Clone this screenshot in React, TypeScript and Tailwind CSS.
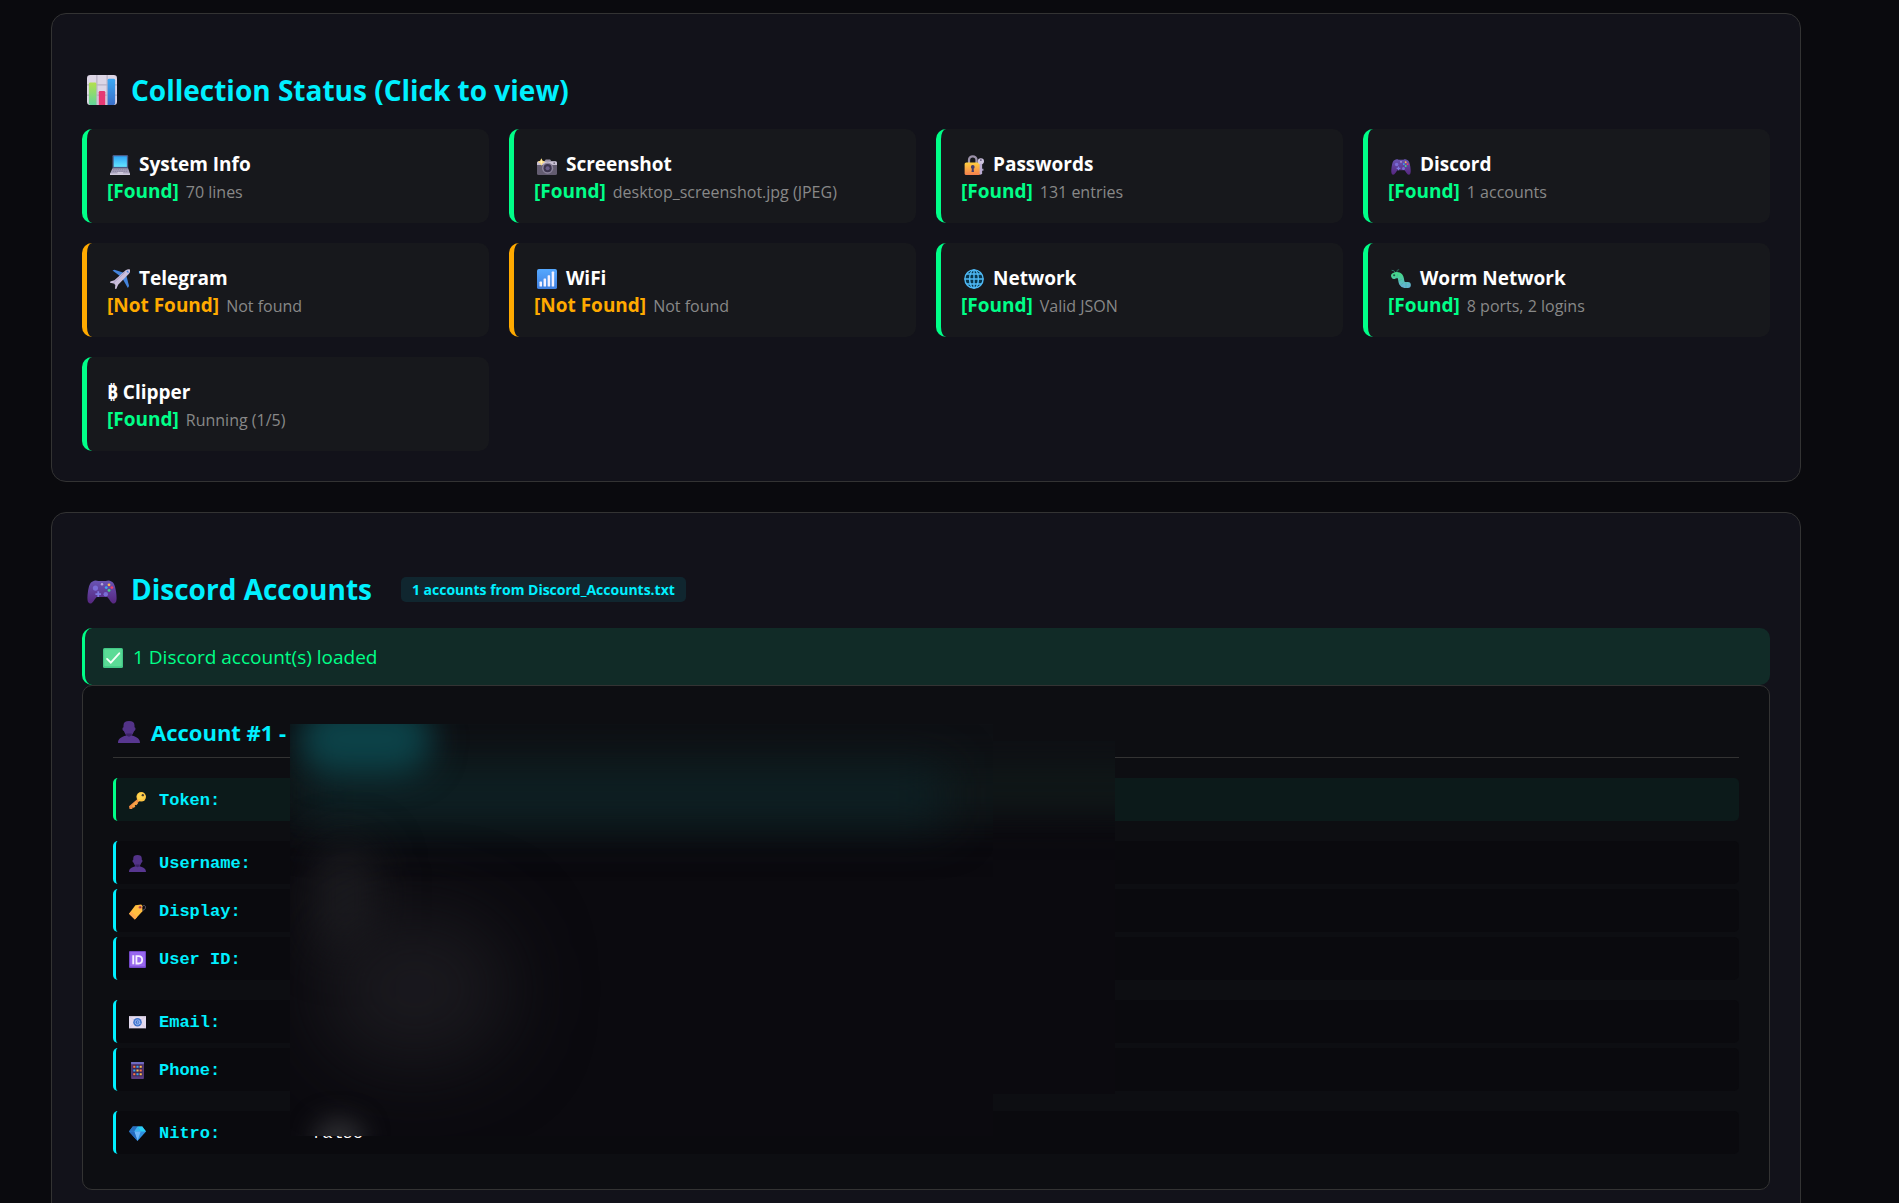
import type { ReactNode } from "react";

type IconName =
  | "chart"
  | "laptop"
  | "camera"
  | "lock"
  | "gamepad"
  | "plane"
  | "signal"
  | "globe"
  | "worm"
  | "check"
  | "person"
  | "key"
  | "tag"
  | "id"
  | "email"
  | "phone"
  | "gem";

const icons: Record<IconName, ReactNode> = {
  chart: (
    <>
      <rect width="32" height="32" rx="3.5" fill="#ddd6e6" />
      <path d="M0 10.5h32M0 21.5h32M10.5 0v32M21.5 0v32" stroke="#b9b2c6" strokeWidth="1.4" />
      <path d="M2 9.5a1.5 1.5 0 0 1 1.5-1.5h5A1.5 1.5 0 0 1 10 9.500V32H3.500A3.500 3.500 0 0 1 2 30z" fill="url(#barGreen)" />
      <path d="M12.500 18.500a1.500 1.500 0 0 1 1.500-1.500h4a1.500 1.500 0 0 1 1.500 1.500V32h-7z" fill="#e63974" />
      <path d="M22 5.500A1.500 1.500 0 0 1 23.500 4h5A1.500 1.500 0 0 1 30 5.500V31l-1.500 1H22z" fill="url(#barBlue)" />
    </>
  ),
  laptop: (
    <>
      <path d="M4 2a2 2 0 0 1 2-2h21a2 2 0 0 1 2 2v19H4z" fill="#4a5a86" />
      <path d="M6 2h21v17H6z" fill="url(#screen)" />
      <path d="M4 21h25l3 9v2H0v-2z" fill="#a9a3bd" />
      <path d="M5 23.500h23M4 26h25" stroke="#837c9b" strokeWidth="1.300" strokeDasharray="2.500 1" />
      <path d="M0 29.500h32V32H0z" fill="#cfc8dc" />
      <path d="M12 27.500h9v2h-9z" fill="#d9d3e4" />
    </>
  ),
  camera: (
    <>
      <rect y="10" width="32" height="22" rx="2.500" fill="#635c70" />
      <path d="M0 12.500A2.500 2.500 0 0 1 2.500 10h27a2.500 2.500 0 0 1 2.500 2.500V16H0z" fill="#c9c1d4" />
      <path d="M12 10l2-3h7l2 3z" fill="#9a92a8" />
      <circle cx="17" cy="21" r="9" fill="#8c849c" />
      <circle cx="17" cy="21" r="6.500" fill="#3c344e" />
      <circle cx="17" cy="21" r="3.200" fill="#695d88" />
      <path d="M7 5l2 4 4 2-4 2-2 4-2-4-4-2 4-2z" fill="#ffdf83" />
      <path d="M7 8l1.500 3L7 14l-1.500-3z" fill="#fff3c4" />
      <circle cx="27.500" cy="13" r="1.300" fill="#635c70" />
    </>
  ),
  lock: (
    <>
      <path d="M8 14V8a6 6 0 0 1 12 0v6" fill="none" stroke="#9b91a8" strokeWidth="3.600" />
      <rect x="1" y="12" width="25" height="20" rx="2.500" fill="url(#lockBody)" />
      <circle cx="14" cy="19" r="3" fill="#433b6b" />
      <path d="M12.800 20h2.400l.8 7h-4z" fill="#433b6b" />
      <circle cx="27" cy="10" r="5" fill="#cfc5e0" />
      <circle cx="27" cy="8" r="1.400" fill="#574b70" />
      <path d="M25 14h4v15l-2 3-2-2z" fill="#b9abd1" />
      <path d="M29 22h2v3h-2z" fill="#b9abd1" />
    </>
  ),
  gamepad: (
    <>
      <path d="M6 8c2-1.500 4-1.500 6-.5h8c2-1 4-1 6 .5C29 9 30 13 31 19c.8 6 1.200 11.500-2 12.500-3 .8-5-5-7.500-7h-11C8 26.500 6 32.300 3 31.500 -.2 30.500 .2 25 1 19 2 13 3 9 6 8z" fill="url(#pad)" />
      <circle cx="9" cy="15" r="2.800" fill="#7a6cd6" />
      <circle cx="20" cy="21.500" r="2.400" fill="#7a6cd6" />
      <path d="M12 18.500v6M9 21.500h6" stroke="#7d79e0" strokeWidth="1.900" />
      <circle cx="23.500" cy="11.500" r="1.500" fill="#ffb84d" />
      <circle cx="26.500" cy="14.500" r="1.500" fill="#ee4168" />
      <circle cx="20.500" cy="14.500" r="1.500" fill="#3ca8f5" />
      <circle cx="23.500" cy="17.500" r="1.500" fill="#45d98a" />
      <circle cx="16" cy="11" r="1.300" fill="#b8a8dc" />
    </>
  ),
  plane: (
    <>
      <path d="M4 2.500l3-1.500 15 5-5 6z" fill="#4383dc" />
      <path d="M30.500 27l-2 3.500L20 15l6-5z" fill="#4383dc" />
      <path d="M25 2c3-2 6-2 7-1 .8 1.500.5 4-2 7L13 25l-3 7-2-.5.5-6L6 23l-6-1 .5-2L7 18z" fill="#cbbfdc" />
      <path d="M8 24l-2-2 18-17" stroke="#a493c0" strokeWidth="1.200" fill="none" />
      <path d="M27 3l2.500 2.500" stroke="#4383dc" strokeWidth="2" />
    </>
  ),
  signal: (
    <>
      <rect width="32" height="32" rx="3" fill="url(#signalBg)" />
      <rect x="4" y="20" width="4" height="8" rx="1" fill="#f3f1ff" />
      <rect x="10.500" y="15" width="4" height="13" rx="1" fill="#f3f1ff" />
      <rect x="17" y="10" width="4" height="18" rx="1" fill="#f3f1ff" />
      <rect x="23.500" y="4" width="4" height="24" rx="1" fill="#f3f1ff" />
    </>
  ),
  globe: (
    <>
      <circle cx="16" cy="16" r="14.700" fill="#07354b" />
      <g fill="none" stroke="#4fb9f5" strokeWidth="2.300">
        <circle cx="16" cy="16" r="14.600" />
        <ellipse cx="16" cy="16" rx="7" ry="14.600" />
        <path d="M16 1v30M1 16h30M4 8h24M4 24h24" />
      </g>
    </>
  ),
  worm: (
    <>
      <path d="M7 6L5 3 1 2M9 6l1-4 3-1" stroke="#2d7566" strokeWidth="1.500" fill="none" />
      <path d="M5 11c5-3 10-1 11 5 .7 5 1 9 6 9.500h5" stroke="url(#wormBody)" strokeWidth="9.500" strokeLinecap="round" fill="none" />
      <path d="M11 8l-2 7M18 16l-6 3M20 22l-5 4M24 21.500V30" stroke="#3eb592" strokeWidth=".8" />
      <circle cx="5" cy="10" r="1.700" fill="#205548" />
    </>
  ),
  check: (
    <>
      <rect width="32" height="32" rx="2.500" fill="#42c886" />
      <rect x="2" y="2" width="28" height="27" rx="1" fill="#5bdb96" />
      <path d="M6.500 17.500l6 6L26 8.500" stroke="#f4fff8" strokeWidth="3" fill="none" strokeLinecap="round" />
    </>
  ),
  person: (
    <>
      <path d="M8 6c0-4 3-6 8-6s8 2 8 6v3c2 0 2 5-.5 5.500C22 18 20 21 20 21h-8s-2-3-3.500-6.500C6 14 6 9 8 9z" fill="#533388" />
      <path d="M12 18h8v4l-4 3-4-3z" fill="#3c2367" />
      <path d="M0 32c0-6 4-9 12-11l4 2 4-2c8 2 12 5 12 11z" fill="#583790" />
    </>
  ),
  key: (
    <>
      <path d="M17 12l4 4L7 29l-1 3H1l-1-5z" fill="#f28c43" />
      <path d="M5 26l4 4 3-3-2-2 2-1 2 1 3-4-4-4z" fill="#f6a145" />
      <circle cx="23" cy="9" r="9" fill="#ffc744" />
      <circle cx="22" cy="8" r="6" fill="#ffd550" />
      <circle cx="26" cy="6" r="2.200" fill="#4a3b2f" />
    </>
  ),
  tag: (
    <>
      <path d="M24 8c3-5 7-4 7 0s-4 7-8 5" stroke="#6b6478" strokeWidth="1.700" fill="none" />
      <path d="M12 4l11-1 2 2v11L11 31 0 20z" fill="#ffbd3f" />
      <path d="M0 20l4-4 11 11-4 4z" fill="#ffa84d" />
      <circle cx="21" cy="8" r="3" fill="#df5f4f" />
      <circle cx="21" cy="8" r="1.300" fill="#5c3440" />
    </>
  ),
  id: (
    <>
      <rect width="32" height="32" rx="2" fill="#7448c9" />
      <rect x="2" y="2" width="28" height="27" rx="1" fill="#9867ef" />
      <path d="M8 8v17" stroke="#f6efff" strokeWidth="3.600" />
      <path d="M14 9.500h4c9 0 9 14 0 14h-4z" stroke="#f6efff" strokeWidth="3.400" fill="none" />
    </>
  ),
  email: (
    <>
      <rect y="4" width="32" height="23" fill="#e4dbef" />
      <path d="M0 4l16 13L32 4M0 27l12-12M32 27L20 15" stroke="#cfc0dc" strokeWidth="1.200" fill="none" />
      <circle cx="16" cy="15.500" r="8" fill="#3f74cd" />
      <circle cx="16" cy="15.500" r="4.500" fill="none" stroke="#a9c4f5" strokeWidth="1.500" />
      <path d="M16 13v5M19 13v5h3" stroke="#a9c4f5" strokeWidth="1.200" fill="none" />
    </>
  ),
  phone: (
    <>
      <rect x="4" width="24" height="32" rx="1.500" fill="#5c3d80" />
      <path d="M4 0h24v4H4z" fill="#6f6bc0" />
      <rect x="6.500" y="5" width="19" height="22" fill="#3a2554" />
      <path d="M8 9h4M8 23h4M20 16h4" stroke="#ff7a45" strokeWidth="4" />
      <path d="M14 9h4M8 16h4M14 23h4" stroke="#3fa7ee" strokeWidth="4" />
      <path d="M20 9h4M14 16h4M20 23h4" stroke="#ffc04a" strokeWidth="4" />
    </>
  ),
  gem: (
    <>
      <path d="M7 3h18l7 9-16 18L0 12z" fill="#2f8fe0" />
      <path d="M7 3h9l-6 9H0z" fill="#2a6fc0" />
      <path d="M16 3h9l7 9H22z" fill="#2bd0f5" />
      <path d="M16 3l6 9H10z" fill="#3cb4ef" />
      <path d="M10 12h12l-6 18z" fill="#6db5f8" />
      <path d="M0 12h10l6 18z" fill="#2468bd" />
    </>
  ),
};

function Icon({ name, className }: { name: IconName; className: string }) {
  return (
    <svg viewBox="0 0 32 32" aria-hidden="true" className={`shrink-0 ${className}`}>
      {icons[name]}
    </svg>
  );
}

// Shared gradients, referenced by id from the icons above
function IconDefs() {
  const defs = [
    { id: "barGreen", from: "#b4e04e", to: "#62d49a" },
    { id: "barBlue", from: "#3ba9f5", to: "#3b6fc9" },
    { id: "screen", from: "#2fa5f5", to: "#63e5ff" },
    { id: "lockBody", from: "#ffcf3f", to: "#f57f4d" },
    { id: "pad", from: "#6a55b5", to: "#56267f" },
    { id: "signalBg", from: "#55a8ff", to: "#3f7fe0" },
    { id: "wormBody", from: "#45d68c", to: "#62b3cf" },
  ];
  return (
    <svg className="absolute size-0" aria-hidden="true">
      <defs>
        {defs.map((d) => (
          <linearGradient key={d.id} id={d.id} x1="0" y1="0" x2="0" y2="1">
            <stop offset="0" stopColor={d.from} />
            <stop offset="1" stopColor={d.to} />
          </linearGradient>
        ))}
      </defs>
    </svg>
  );
}

interface Status {
  title: string;
  icon?: IconName;
  found: boolean;
  detail: string;
}

const statuses: Status[] = [
  { title: "System Info", icon: "laptop", found: true, detail: "70 lines" },
  { title: "Screenshot", icon: "camera", found: true, detail: "desktop_screenshot.jpg (JPEG)" },
  { title: "Passwords", icon: "lock", found: true, detail: "131 entries" },
  { title: "Discord", icon: "gamepad", found: true, detail: "1 accounts" },
  { title: "Telegram", icon: "plane", found: false, detail: "Not found" },
  { title: "WiFi", icon: "signal", found: false, detail: "Not found" },
  { title: "Network", icon: "globe", found: true, detail: "Valid JSON" },
  { title: "Worm Network", icon: "worm", found: true, detail: "8 ports, 2 logins" },
  { title: "₿ Clipper", found: true, detail: "Running (1/5)" },
];

interface Field {
  label: string;
  icon: IconName;
  value?: string;
  highlight?: boolean;
}

const fieldGroups: Field[][] = [
  [{ label: "Token:", icon: "key", highlight: true }],
  [
    { label: "Username:", icon: "person" },
    { label: "Display:", icon: "tag" },
    { label: "User ID:", icon: "id" },
  ],
  [
    { label: "Email:", icon: "email" },
    { label: "Phone:", icon: "phone" },
  ],
  [{ label: "Nitro:", icon: "gem", value: "false" }],
];

function StatusCard({ status }: { status: Status }) {
  return (
    <a
      href="#details"
      className={`block rounded-[10px] border-l-[5px] bg-[#17181c] px-5 pt-[22px] pb-[18px] leading-[27px] ${
        status.found ? "border-[#00ff88]" : "border-[#ffaa00]"
      }`}
    >
      <div className="flex items-center text-[19px] font-bold text-white">
        {status.icon && <Icon name={status.icon} className="ml-[3px] mr-[9px] size-5" />}
        {status.title}
      </div>
      <div className="flex h-[27px] items-baseline gap-[7px]">
        <span className={`text-[19px] font-bold ${status.found ? "text-[#00ff88]" : "text-[#ffaa00]"}`}>
          {status.found ? "[Found]" : "[Not Found]"}
        </span>
        <span className="text-base leading-[27px] text-[#888888]">{status.detail}</span>
      </div>
    </a>
  );
}

function FieldRow({ field }: { field: Field }) {
  return (
    <div
      className={`flex h-[43px] items-center rounded-[5px] border-l-[3px] pt-0.5 pl-[13px] ${
        field.highlight ? "border-[#00ff88] bg-[#0c1a1a]" : "border-[#00f0ff] bg-[#0a0a0e]"
      }`}
    >
      <dt className="flex w-[183px] items-center font-bold text-[#00f0ff]">
        <Icon name={field.icon} className="mr-[13px] size-[17px]" />
        {field.label}
      </dt>
      <dd className="text-white">{field.value}</dd>
    </div>
  );
}

// Blurred cover over the private values
function RedactedArea() {
  return (
    <>
      <div className="absolute left-[207px] top-[38px] h-[412px] w-[703px] overflow-hidden bg-[#0b0a0f]">
        <div className="absolute -left-4 -top-16 h-[160px] w-[900px] bg-[#0e1014] blur-xl" />
        <div className="absolute -left-4 top-[40px] h-[54px] w-[900px] bg-[#0f1618] blur-lg" />
        <div className="absolute left-4 top-[44px] h-[56px] w-[640px] bg-[#0d2024] blur-xl" />
        <div className="absolute left-[8px] -top-5 h-[70px] w-[135px] rounded-full bg-[#0c4248] blur-lg" />
        <div className="absolute left-[25px] top-[120px] h-[110px] w-[60px] rounded-full bg-[#1d1d21] blur-xl" />
        <div className="absolute left-[30px] top-[190px] h-[150px] w-[190px] rounded-full bg-[#1a191e] blur-2xl" />
        <div className="absolute left-[24px] top-[395px] h-[40px] w-[50px] rounded-full bg-[#2c2c30] blur-md" />
      </div>
      <div className="absolute left-[910px] top-[55px] h-[353px] w-[122px] overflow-hidden bg-[#0b0a0f]">
        <div className="absolute -left-16 -top-16 h-[144px] w-[250px] bg-[#0e1014] blur-lg" />
        <div className="absolute -left-16 top-[23px] h-[46px] w-[250px] bg-[#0f1617] blur-md" />
      </div>
    </>
  );
}

function Panel({ children }: { children: ReactNode }) {
  return (
    <section className="rounded-[15px] border border-[#333333] bg-[#12121a] px-[30px] pt-14 pb-[30px]">
      {children}
    </section>
  );
}

function PanelHeading({ icon, children }: { icon: IconName; children: ReactNode }) {
  return (
    <h2 className="flex items-center text-[28px] leading-10 font-bold text-[#00f0ff]">
      <Icon name={icon} className="ml-[5px] mr-[14px] size-[30px]" />
      {children}
    </h2>
  );
}

export default function App() {
  return (
    <main className="flex h-screen flex-col gap-[30px] overflow-hidden bg-[#0a0a0e] pt-[13px] pr-[98px] pl-[51px] font-['Open_Sans','Noto_Sans',sans-serif]">
      <IconDefs />

      <Panel>
        <PanelHeading icon="chart">Collection Status (Click to view)</PanelHeading>
        <div className="mt-[19px] grid grid-cols-4 gap-5">
          {statuses.map((status) => (
            <StatusCard key={status.title} status={status} />
          ))}
        </div>
      </Panel>

      <Panel>
        <div className="flex items-center">
          <PanelHeading icon="gamepad">Discord Accounts</PanelHeading>
          <span className="ml-[29px] rounded-[5px] bg-[#10262f] px-[11px] text-sm leading-[25px] font-bold text-[#00f0ff]">
            1 accounts from Discord_Accounts.txt
          </span>
        </div>

        <p className="mt-[19px] flex h-[57px] items-center rounded-[10px] border-l-[3px] border-[#00ff88] bg-[#112b27] pt-0.5 pl-[18px] text-[19px] text-[#00ff88]">
          <Icon name="check" className="mr-[10px] size-5" />
          1 Discord account(s) loaded
        </p>

        <div id="details" className="relative rounded-[10px] border border-[#333333] bg-[#0d0e12] px-[30px] pt-[31px] pb-[35px]">
          <h3 className="flex items-center border-b border-[#333333] pb-[10px] text-[22px] leading-[30px] font-bold text-[#00f0ff]">
            <Icon name="person" className="ml-[5px] mr-[11px] size-[22px]" />
            Account #1 -
          </h3>
          <dl className="mt-5 flex flex-col gap-5 font-['Liberation_Mono',monospace] text-[17px]">
            {fieldGroups.map((group) => (
              <div key={group[0].label} className="flex flex-col gap-[5px]">
                {group.map((field) => (
                  <FieldRow key={field.label} field={field} />
                ))}
              </div>
            ))}
          </dl>
          <RedactedArea />
        </div>
      </Panel>
    </main>
  );
}
